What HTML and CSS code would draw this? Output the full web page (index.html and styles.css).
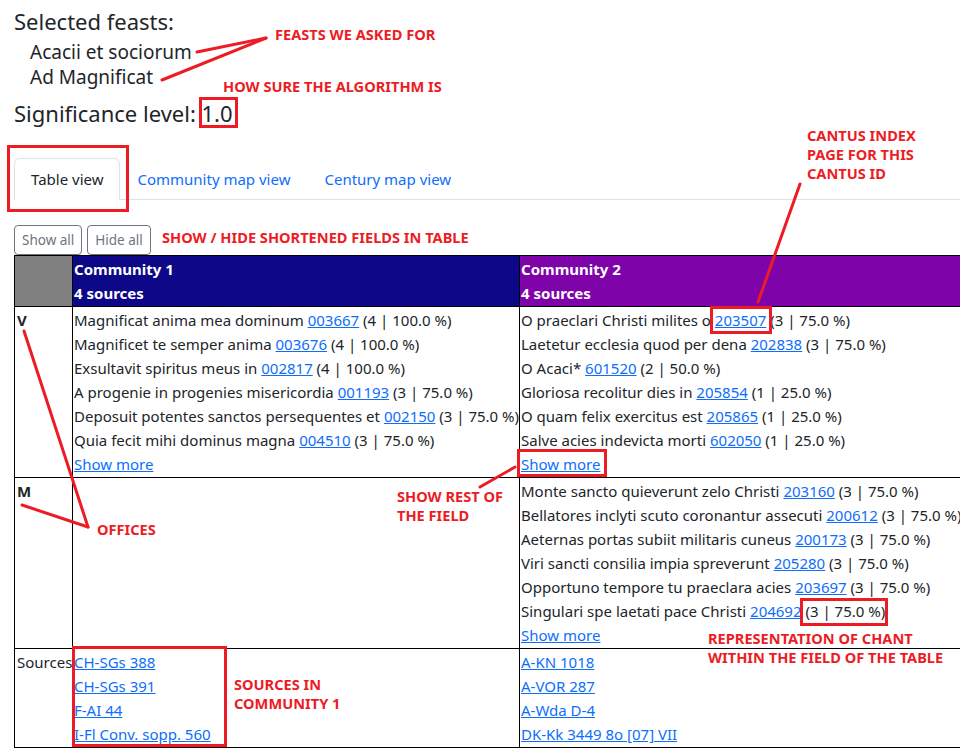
FILE: index.html
```html
<!DOCTYPE html>
<html lang="en">
<head>
<meta charset="utf-8">
<title>Feast analysis</title>
<link rel="stylesheet" href="styles.css">
</head>
<body>
<div class="page">
  <h4 class="title">Selected feasts:</h4>
  <ul class="feasts">
    <li>Acacii et sociorum</li>
    <li>Ad Magnificat</li>
  </ul>
  <h4 class="signif">Significance level: 1.0</h4>

  <ul class="tabs">
    <li class="tab active"><span>Table view</span></li>
    <li class="tab"><a href="#">Community map view</a></li>
    <li class="tab"><a href="#">Century map view</a></li>
  </ul>

  <div class="buttons">
    <button class="btn">Show all</button>
    <button class="btn">Hide all</button>
  </div>

  <table class="res">
    <colgroup><col class="c0"><col class="c1"><col class="c2"></colgroup>
    <thead>
      <tr>
        <th class="corner"></th>
        <th class="com1">Community 1<br>4 sources</th>
        <th class="com2">Community 2<br>4 sources</th>
      </tr>
    </thead>
    <tbody>
      <tr>
        <td class="office">V</td>
        <td>
          <div>Magnificat anima mea dominum <a href="#">003667</a> (4 | 100.0 %)</div>
          <div>Magnificet te semper anima <a href="#">003676</a> (4 | 100.0 %)</div>
          <div>Exsultavit spiritus meus in <a href="#">002817</a> (4 | 100.0 %)</div>
          <div>A progenie in progenies misericordia <a href="#">001193</a> (3 | 75.0 %)</div>
          <div>Deposuit potentes sanctos persequentes et <a href="#">002150</a> (3 | 75.0 %)</div>
          <div>Quia fecit mihi dominus magna <a href="#">004510</a> (3 | 75.0 %)</div>
          <div><a href="#">Show more</a></div>
        </td>
        <td>
          <div>O praeclari Christi milites o <a href="#">203507</a> (3 | 75.0 %)</div>
          <div>Laetetur ecclesia quod per dena <a href="#">202838</a> (3 | 75.0 %)</div>
          <div>O Acaci* <a href="#">601520</a> (2 | 50.0 %)</div>
          <div>Gloriosa recolitur dies in <a href="#">205854</a> (1 | 25.0 %)</div>
          <div>O quam felix exercitus est <a href="#">205865</a> (1 | 25.0 %)</div>
          <div>Salve acies indevicta morti <a href="#">602050</a> (1 | 25.0 %)</div>
          <div><a href="#">Show more</a></div>
        </td>
      </tr>
      <tr>
        <td class="office">M</td>
        <td></td>
        <td>
          <div>Monte sancto quieverunt zelo Christi <a href="#">203160</a> (3 | 75.0 %)</div>
          <div>Bellatores inclyti scuto coronantur assecuti <a href="#">200612</a> (3 | 75.0 %)</div>
          <div>Aeternas portas subiit militaris cuneus <a href="#">200173</a> (3 | 75.0 %)</div>
          <div>Viri sancti consilia impia spreverunt <a href="#">205280</a> (3 | 75.0 %)</div>
          <div>Opportuno tempore tu praeclara acies <a href="#">203697</a> (3 | 75.0 %)</div>
          <div>Singulari spe laetati pace Christi <a href="#">204692</a> (3 | 75.0 %)</div>
          <div><a href="#">Show more</a></div>
        </td>
      </tr>
      <tr>
        <td class="srclabel">Sources</td>
        <td>
          <div><a href="#">CH-SGs 388</a></div>
          <div><a href="#">CH-SGs 391</a></div>
          <div><a href="#">F-AI 44</a></div>
          <div><a href="#">I-Fl Conv. sopp. 560</a></div>
        </td>
        <td>
          <div><a href="#">A-KN 1018</a></div>
          <div><a href="#">A-VOR 287</a></div>
          <div><a href="#">A-Wda D-4</a></div>
          <div><a href="#">DK-Kk 3449 8o [07] VII</a></div>
        </td>
      </tr>
    </tbody>
  </table>
</div>

<svg class="overlay" width="960" height="756" viewBox="0 0 960 756" aria-hidden="true">
  <g fill="none" stroke="#ed1c24" stroke-width="3" stroke-linecap="round">
    <line x1="197" y1="52" x2="266" y2="38"/>
    <line x1="162" y1="80" x2="266" y2="38"/>
    <line x1="800" y1="184" x2="758" y2="302"/>
    <line x1="24" y1="331" x2="88" y2="527"/>
    <line x1="22" y1="505" x2="88" y2="527"/>
    <line x1="480" y1="487" x2="515" y2="467"/>
    <rect x="8.5" y="146.5" width="119" height="64"/>
    <rect x="200.5" y="98.5" width="36" height="28"/>
    <rect x="711.5" y="307.5" width="59" height="25"/>
    <rect x="518.5" y="450.5" width="87" height="25"/>
    <rect x="801.5" y="599.5" width="85" height="25"/>
    <rect x="73.5" y="647.5" width="152" height="98"/>
  </g>
</svg>

<div class="note n-feasts">FEASTS WE ASKED FOR</div>
<div class="note n-sure">HOW SURE THE ALGORITHM IS</div>
<div class="note n-cantus">CANTUS INDEX<br>PAGE FOR THIS<br>CANTUS ID</div>
<div class="note n-showhide">SHOW / HIDE SHORTENED FIELDS IN TABLE</div>
<div class="note n-offices">OFFICES</div>
<div class="note n-rest">SHOW REST OF<br>THE FIELD</div>
<div class="note n-repr">REPRESENTATION OF CHANT<br>WITHIN THE FIELD OF THE TABLE</div>
<div class="note n-sources">SOURCES IN<br>COMMUNITY 1</div>
</body>
</html>
```

FILE: styles.css
```css
* { box-sizing: border-box; }

html, body {
  margin: 0;
  padding: 0;
  background: #fff;
}

body {
  font-family: "Noto Sans", "Open Sans", sans-serif;
  color: #212529;
  font-size: 15px;
  width: 960px;
  height: 756px;
  overflow: hidden;
  position: relative;
}

.page {
  padding-left: 14px;
}

.title,
.signif {
  margin: 0;
  font-weight: 400;
  font-size: 22px;
  line-height: 26px;
}

.title { padding-top: 8px; }

.feasts {
  list-style: none;
  margin: 6px 0 0;
  padding: 0 0 0 16px;
  font-size: 19px;
  line-height: 25px;
}

.signif { margin-top: 10px; }

/* tabs */
.tabs {
  list-style: none;
  margin: 32px 0 0;
  padding: 0;
  display: flex;
  border-bottom: 1px solid #dee2e6;
}

.tab {
  font-size: 15px;
  line-height: 24px;
  padding: 8px 16px;
  border: 1px solid transparent;
  border-top-left-radius: 6px;
  border-top-right-radius: 6px;
  margin-bottom: -1px;
}

.tab a {
  color: #0d6efd;
  text-decoration: none;
}

.tab.active {
  border-color: #dee2e6 #dee2e6 #fff;
  background: #fff;
  color: #212529;
}

/* buttons */
.buttons {
  display: flex;
  gap: 5px;
  margin-top: 25px;
}

.btn {
  font-family: inherit;
  font-size: 13.5px;
  color: #6c757d;
  background: #fff;
  border: 1px solid #6c757d;
  border-radius: 4px;
  height: 30px;
  padding: 0 7px;
  line-height: 28px;
}

/* table */
.res {
  border-collapse: collapse;
  table-layout: fixed;
  width: 946px;
  font-size: 15px;
  line-height: 24px;
}

.c0 { width: 58px; }
.c1 { width: 447px; }
.c2 { width: 441px; }

.res th,
.res td {
  border: 1px solid #000;
  padding: 1px 0 1px 1px;
  vertical-align: top;
  text-align: left;
  white-space: nowrap;
  overflow: hidden;
}

.res th {
  color: #fff;
  font-weight: 700;
}

.corner { background: #808080; }
.com1 { background: #0d0887; }
.com2 { background: #7e03a8; }

.res a {
  color: #0d6efd;
  text-decoration: underline;
}

.office {
  font-weight: 700;
}

.res td.office,
.res td.srclabel {
  padding-left: 2px;
}

/* annotations overlay */
.overlay {
  position: absolute;
  left: 0;
  top: 0;
  pointer-events: none;
}

.note {
  position: absolute;
  color: #ed1c24;
  font-family: "Noto Sans", "Open Sans", sans-serif;
  font-weight: 700;
  font-size: 14.6px;
  line-height: 19px;
  white-space: nowrap;
}

.n-feasts { left: 275px; top: 25px; }
.n-sure { left: 223px; top: 77px; }
.n-cantus { left: 807px; top: 126px; }
.n-showhide { left: 162px; top: 228px; }
.n-offices { left: 97px; top: 520px; }
.n-rest { left: 397px; top: 487px; }
.n-repr { left: 708px; top: 629px; }
.n-sources { left: 234px; top: 675px; }
```
